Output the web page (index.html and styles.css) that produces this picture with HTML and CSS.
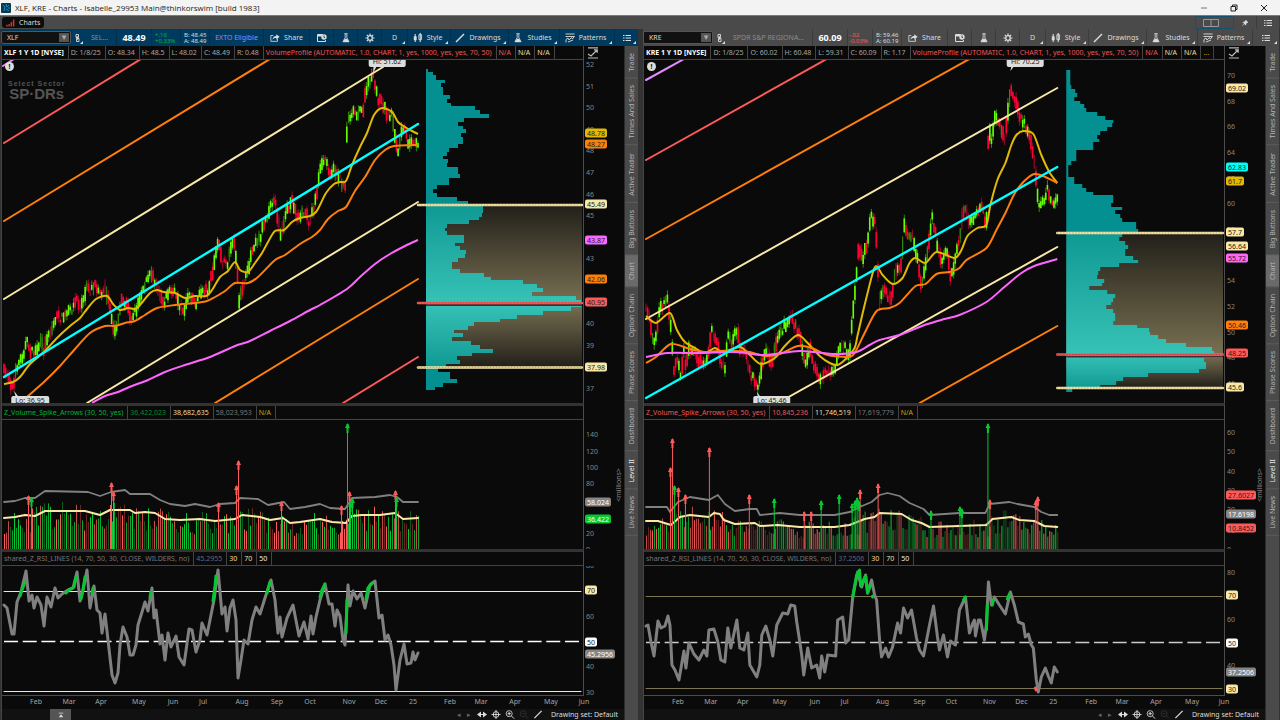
FILE: index.html
```html
<!DOCTYPE html>
<html lang="en">
<head>
    <meta charset="UTF-8">
    <meta name="viewport" content="width=device-width, initial-scale=1.0">
    <title>XLF, KRE - Charts - Main@thinkorswim</title>
    <link rel="stylesheet" href="styles.css">
</head>
<body>
    <svg class="sprite" aria-hidden="true">
        <symbol id="i-share" viewBox="0 0 12 10"><path d="M4 2H1v7h8V6" fill="none" stroke="currentColor"/><path d="M11.500 3.500L7.500.5v2C5 2.500 3.500 4 3 7c1-1.500 2.500-2 4.500-2v2z" fill="currentColor"/></symbol>
        <symbol id="i-cal" viewBox="0 0 10 10"><path d="M.5 2.500h5M.5 2v6.500h8V7M.5 1.500h5v1.500h-5z" fill="none" stroke="currentColor"/><circle cx="7" cy="4" r="2.700" fill="currentColor"/><path d="M7 2.500v2h1" fill="none" stroke="#334" stroke-width=".9"/></symbol>
        <symbol id="i-flask" viewBox="0 0 10 12"><path d="M3 .8h4M4 1v4.500L1.300 10.500h7.400L6 5.500V1" fill="none" stroke="currentColor"/><path d="M3.500 7h3l2 3.800h-7z" fill="currentColor"/></symbol>
        <symbol id="i-gear" viewBox="0 0 10 10"><circle cx="5" cy="5" r="2.300" fill="none" stroke="currentColor" stroke-width="1.300"/><path d="M5 .5v2M5 7.500v2M.5 5h2M7.500 5h2M1.800 1.800l1.400 1.400M6.800 6.800l1.400 1.400M1.800 8.200l1.400-1.400M6.800 3.200l1.400-1.400" stroke="currentColor" stroke-width="1.200"/></symbol>
        <symbol id="i-candle" viewBox="0 0 9 9"><path d="M2 1v7M6.500 0v8" stroke="currentColor"/><path d="M.7 3h2.600v3.500H.7z" fill="currentColor"/><path d="M5.300 1.500h2.400v4.500H5.300z" fill="none" stroke="currentColor" stroke-width=".8"/></symbol>
        <symbol id="i-line" viewBox="0 0 10 10"><path d="M1 9L9 1" stroke="currentColor" stroke-width="1.400"/></symbol>
        <symbol id="i-pattern" viewBox="0 0 10 10"><path d="M.5 1h9M.5 3.500h9M1 9.500v-3l2-1.500 1 2 2.500-2.500 1 1.500L9.500 3M3 9l5-2" fill="none" stroke="currentColor" stroke-width=".9"/></symbol>
        <symbol id="i-list" viewBox="0 0 8 8"><path d="M0 1.500h1.500M0 4h1.500M0 6.500h1.500M2.500 1.500H8M2.500 4H8M2.500 6.500H8" stroke="currentColor"/></symbol>
        <symbol id="i-link" viewBox="0 0 5 10"><path d="M1 1.500h2.500v3H1zM1.500 5.500H4v3H1.500zM2.200 3v4" fill="none" stroke="currentColor" stroke-width=".9"/></symbol>
        <symbol id="i-scale" viewBox="0 0 12 12"><path d="M1 .8h10M1 11h10M1 7l3 2 6-6M7 2.800h3.200v3" fill="none" stroke="currentColor" stroke-width="1.200"/></symbol>
        <symbol id="i-pan" viewBox="0 0 10 8"><path d="M0 4l4-3v6zM10 4L6 1v6z" fill="currentColor"/><path d="M2 4h6" stroke="currentColor"/></symbol>
        <symbol id="i-cross" viewBox="0 0 10 10"><circle cx="5" cy="5" r="3.200" fill="none" stroke="currentColor"/><path d="M5 0v10M0 5h10" stroke="currentColor"/></symbol>
        <symbol id="i-zoomin" viewBox="0 0 11 11"><circle cx="4.500" cy="4.500" r="3.700" fill="none" stroke="currentColor"/><path d="M7.500 7.500L10.500 10.500M4.500 2.500v4M2.500 4.500h4" stroke="currentColor" stroke-width="1.200"/></symbol>
        <symbol id="i-zoomout" viewBox="0 0 11 11"><circle cx="4.500" cy="4.500" r="3.700" fill="none" stroke="currentColor"/><path d="M7.500 7.500L10.500 10.500M2.500 4.500h4" stroke="currentColor"/></symbol>
        <symbol id="i-pin" viewBox="0 0 8 8"><path d="M5 0l3 3-1 .5-1.500 1.500L5 7 3 5 .5 7.500 3 5 1 3l2-.5L4.500 1z" fill="currentColor" stroke="currentColor" stroke-width=".5"/></symbol>
    </svg>

    <header class="titlebar">
        <svg class="app-icon" viewBox="0 0 10 10"><rect width="10" height="10" rx="1" fill="#083a50"/><path d="M2 2l2 2-1 4M5 1l1 3 2-2M5 6l3 2M7 5h2" stroke="#1b8fb8" fill="none"/></svg>
        <h1 class="window-title">XLF, KRE - Charts - Isabelle_29953 Main@thinkorswim [build 1983]</h1>
        <div class="window-controls">
            <button aria-label="Minimize"><svg viewBox="0 0 8 8"><path d="M1 4h6" stroke="#777"/></svg></button>
            <button aria-label="Restore"><svg viewBox="0 0 8 8"><path d="M1 2.500h4.500V7H1zM2.500 2.500V1H7v4.500H5.500" fill="none" stroke="#222"/></svg></button>
            <button aria-label="Close"><svg viewBox="0 0 8 8"><path d="M1 1l6 6M7 1L1 7" stroke="#222"/></svg></button>
        </div>
    </header>

    <nav class="tabbar">
        <button class="main-tab"><svg viewBox="0 0 10 8"><path d="M1 8V6M3.500 8V5M6 8V3M8.500 8V0" stroke="#e03030" stroke-width="1.600"/></svg>Charts</button>
        <div class="tabbar-tools">
            <button class="grid-btn" aria-label="Layout"><svg viewBox="0 0 16 8"><path d="M.5.5h15v7H.5zM8 .5v7" fill="none" stroke="#999"/></svg></button>
            <button class="pin-btn" aria-label="Pin"><svg class="ico-s"><use href="#i-pin"/></svg></button>
            <button class="pin-btn" aria-label="Menu"><svg class="ico"><use href="#i-list"/></svg></button>
        </div>
    </nav>

    <main class="workspace">
        <section class="panel panel-active" id="xlf">
            <div class="toolbar">
                <label class="symbol"><select aria-label="Symbol"><option>XLF</option></select></label>
                <button class="tool menu link" aria-label="Link"><svg class="ico-link"><use href="#i-link"/></svg></button>
                <span class="cell desc">SEL...</span>
                <span class="cell last">48.49</span>
                <span class="cell stack up"><span>+.16</span><span>+0.33%</span></span>
                <span class="cell stack"><span>B: 48.45</span><span>A: 48.49</span></span>
                <span class="cell exto">EXTO Eligible</span>
                <div class="tools"></div>
            </div>
            <div class="panel-body">
                <div class="charts">
                    <div class="row head">
                        <div class="labels">
                            <b>XLF 1 Y 1D [NYSE]</b><span>D: 1/8/25</span><span>O: 48.34</span><span>H: 48.5</span><span>L: 48.02</span><span>C: 48.49</span><span>R: 0.48</span><span class="red">VolumeProfile (AUTOMATIC, 1.0, CHART, 1, yes, 1000, yes, yes, 70, 50)</span><span class="red">N/A</span><span class="cream">N/A</span><span class="cream">N/A</span>
                        </div>
                        <div class="axis"><svg class="scale"><use href="#i-scale"/></svg></div>
                    </div>
                    <div class="row price">
                        <div class="plot">
                            <span class="info">!</span>
                            <div class="watermark"><small>Select Sector</small><strong>SP&#183;DRs</strong></div>
                        </div>
                        <div class="axis"></div>
                    </div>
                    <div class="row head sub">
                        <div class="labels"><span class="green">Z_Volume_Spike_Arrows (30, 50, yes)</span><span class="green dim">36,422,023</span><span class="cream">38,682,635</span><span class="dim">58,023,953</span><span class="gold">N/A</span></div>
                        <div class="axis"></div>
                    </div>
                    <div class="row volume"><div class="plot"></div><div class="axis"><span class="unit">&lt;millions&gt;</span></div></div>
                    <div class="row head sub">
                        <div class="labels"><span class="dim">shared_Z_RSI_LINES (14, 70, 50, 30, CLOSE, WILDERS, no)</span><span class="slate">45.2955</span><span class="cream">30</span><span class="cream">70</span><span class="white">50</span></div>
                        <div class="axis"></div>
                    </div>
                    <div class="row rsi"><div class="plot"></div><div class="axis"></div></div>
                    <div class="months"></div>
                    <div class="footer">
                        <button class="handle" aria-label="Expand"><svg viewBox="0 0 8 8"><path d="M1 1.500h6" stroke="#ddd"/><path d="M1 7l3-4 3 4z" fill="#ddd"/></svg></button>
                        <div class="footer-tools"></div>
                    </div>
                </div>
                <nav class="side"></nav>
            </div>
        </section>

        <section class="panel" id="kre">
            <div class="toolbar">
                <label class="symbol"><select aria-label="Symbol"><option>KRE</option></select></label>
                <button class="tool menu link" aria-label="Link"><svg class="ico-link"><use href="#i-link"/></svg></button>
                <span class="cell desc">SPDR S&amp;P REGIONA...</span>
                <span class="cell last">60.09</span>
                <span class="cell stack down"><span>-.02</span><span>-0.03%</span></span>
                <span class="cell stack"><span>B: 59.46</span><span>A: 60.19</span></span>
                <div class="tools"></div>
            </div>
            <div class="panel-body">
                <div class="charts">
                    <div class="row head">
                        <div class="labels">
                            <b>KRE 1 Y 1D [NYSE]</b><span>D: 1/8/25</span><span>O: 60.02</span><span>H: 60.48</span><span>L: 59.31</span><span>C: 60.09</span><span>R: 1.17</span><span class="red">VolumeProfile (AUTOMATIC, 1.0, CHART, 1, yes, 1000, yes, yes, 70, 50)</span><span class="red">N/A</span><span class="cream">N/A</span><span class="cream">N/A</span><span class="gold">...</span>
                        </div>
                        <div class="axis"><svg class="scale"><use href="#i-scale"/></svg></div>
                    </div>
                    <div class="row price">
                        <div class="plot"><span class="info">!</span></div>
                        <div class="axis"></div>
                    </div>
                    <div class="row head sub">
                        <div class="labels"><span class="red">Z_Volume_Spike_Arrows (30, 50, yes)</span><span class="red">10,845,236</span><span class="cream">11,746,519</span><span class="dim">17,619,779</span><span class="gold">N/A</span></div>
                        <div class="axis"></div>
                    </div>
                    <div class="row volume"><div class="plot"></div><div class="axis"><span class="unit">&lt;millions&gt;</span></div></div>
                    <div class="row head sub">
                        <div class="labels"><span class="dim">shared_Z_RSI_LINES (14, 70, 50, 30, CLOSE, WILDERS, no)</span><span class="slate">37.2506</span><span class="cream">30</span><span class="cream">70</span><span class="white">50</span></div>
                        <div class="axis"></div>
                    </div>
                    <div class="row rsi"><div class="plot"></div><div class="axis"></div></div>
                    <div class="months"></div>
                    <div class="footer"><div class="footer-tools"></div></div>
                </div>
                <nav class="side"></nav>
            </div>
        </section>
    </main>

    <script src="charts.js"></script>
</body>
</html>
```
FILE: styles.css
```css
* {
    margin: 0;
    padding: 0;
    box-sizing: border-box;
}

body {
    height: 100vh;
    display: flex;
    flex-direction: column;
    overflow: hidden;
    background: #0a0a0a;
    color: #a4a4a4;
    font-family: 'Noto Sans', 'Open Sans', sans-serif;
    font-size: 7px;
    line-height: 10px;
    white-space: nowrap;
}

button, select {
    font: inherit;
    color: inherit;
    background: none;
    border: none;
    white-space: nowrap;
}

svg {
    display: block;
}

.sprite {
    position: absolute;
    width: 0;
    height: 0;
}

/* Window chrome */
.titlebar {
    display: flex;
    align-items: center;
    gap: 4px;
    height: 15px;
    padding-left: 1px;
    background: #f3f3f3;
    color: #222;
}

.app-icon {
    width: 10px;
    height: 10px;
}

.window-title {
    flex: 1;
    font-family: 'Open Sans', 'Noto Sans', sans-serif;
    font-size: 8px;
    font-weight: 400;
}

.window-controls {
    display: flex;
    gap: 22px;
    padding-right: 12px;
}

.window-controls svg {
    width: 8px;
    height: 8px;
}

.tabbar {
    display: flex;
    justify-content: space-between;
    height: 14px;
    background: #4a4a4a;
    border-top: 1px solid #767c7c;
}

.main-tab {
    display: flex;
    align-items: center;
    gap: 4px;
    margin: 1px 2px;
    padding: 0 4px;
    border-radius: 3px;
    background: #0c0c0c;
    color: #ddd;
}

.main-tab svg {
    width: 9px;
    height: 8px;
}

.tabbar-tools {
    display: flex;
}

.grid-btn {
    width: 39px;
    padding-left: 7px;
    border: 1px solid #17506e;
}

.grid-btn svg {
    width: 16px;
    height: 8px;
}

.pin-btn {
    width: 23px;
    display: flex;
    align-items: center;
    justify-content: center;
    border-right: 1px solid #3c3c3c;
    color: #ddd;
}

.ico {
    width: 8px;
    height: 8px;
}

.ico-s {
    width: 6px;
    height: 6px;
}

/* Panels */
.workspace {
    flex: 1;
    min-height: 0;
    display: grid;
    grid-template-columns: 1fr 1fr;
    background: #333;
}

.panel {
    display: flex;
    flex-direction: column;
    min-width: 0;
    min-height: 0;
    padding: 0 1px 0 3px;
}

.panel-active {
    padding: 0 2px 0 1px;
}

.toolbar {
    display: flex;
    align-items: stretch;
    height: 17px;
    background: #4a4a4a;
    color: #dcdcdc;
}

.panel-active .toolbar {
    background: #003b5f;
}

.symbol {
    display: flex;
    align-items: center;
    position: relative;
    width: 70px;
}

.symbol select {
    appearance: none;
    width: 100%;
    height: 13px;
    padding-left: 5px;
    background: #111;
    border: 1px solid #555;
    border-radius: 2px;
}

.symbol::after {
    content: '▾';
    position: absolute;
    right: 2px;
    width: 10px;
    height: 9px;
    background: #555;
    color: #aaa;
    font-family: 'DejaVu Sans', sans-serif;
    font-size: 9px;
    line-height: 9px;
    text-align: center;
    pointer-events: none;
}

.cell, .tool {
    display: flex;
    align-items: center;
    justify-content: center;
    gap: 4px;
    border-right: 1px solid rgba(0, 0, 0, 0.18);
}

.tool {
    position: relative;
}

.tool.menu::after {
    content: '';
    position: absolute;
    right: 2px;
    bottom: 2px;
    border-left: 3px solid transparent;
    border-bottom: 3px solid #ddd;
}

.tool.link {
    width: 12px;
    border: none;
}

.tool.link::after {
    right: 0;
}

.ico-link {
    width: 5px;
    height: 10px;
}

.desc {
    width: 88px;
    color: #8a8a8a;
}

.panel-active .desc {
    width: 34px;
    color: #7c93a2;
}

.last {
    width: 35px;
    color: #fff;
    font-size: 9px;
    font-weight: 700;
}

.stack {
    width: 29px;
    flex-direction: column;
    align-items: flex-start;
    padding-left: 3px;
    gap: 0;
    font-size: 6px;
    line-height: 6px;
}

.up {
    color: #00b83a;
}

.down {
    color: #ff5656;
    width: 25px;
    padding-left: 1px;
}

.exto {
    width: 54px;
    color: #a583f2;
}

.tools {
    flex: 1;
    display: flex;
}

.w-share { width: 46px; }
.w-icon { width: 24px; }
.w-period { width: 26px; }
.w-style { width: 43px; }
.w-draw { width: 58px; }
.w-study { width: 51px; }
.w-pattern { width: 55px; }
.w-list { flex: 1; border: none; }

.w-style, .w-draw, .w-study, .w-pattern {
    padding-right: 3px;
}

.tool .ico-m {
    width: 10px;
    height: 10px;
}

/* Charts column */
.panel-body {
    flex: 1;
    min-height: 0;
    display: flex;
}

.charts {
    flex: 1;
    min-width: 0;
    display: flex;
    flex-direction: column;
    background: #0a0a0a;
    border-left: 1px solid #444;
}

.row {
    display: flex;
    min-height: 0;
}

.plot, .labels {
    flex: 1;
    min-width: 0;
    position: relative;
    border-right: 1px solid #4c4c4c;
}

.axis {
    width: 40px;
    position: relative;
}

.price {
    flex: 343;
}

.volume {
    flex: 129;
}

.rsi {
    flex: 130;
}

.volume .axis, .price .plot, .price .axis, .rsi .axis {
    overflow: hidden;
}

.rsi .plot {
    border-bottom: 1px solid #4c4c4c;
}

.head {
    height: 14px;
}

.sub {
    height: 17px;
}

.sub .labels {
    border-top: 3px solid #333;
}

.labels {
    display: flex;
    border-bottom: 1px solid #444;
    overflow: hidden;
}

.labels > * {
    display: flex;
    align-items: center;
    padding: 0 4px 0 2px;
    border-right: 1px solid #444;
}

.labels b {
    color: #fff;
}

.labels .red { color: #f05555; }
.labels .green { color: #00b33a; }
.labels .cream { color: #f0dfa0; }
.labels .gold { color: #c8a010; }
.labels .white { color: #eee; }
.labels .dim { color: #767676; }
.labels .slate { color: #60687c; }
.labels .green.dim { color: #008a30; }

.scale {
    width: 12px;
    height: 12px;
    margin: 1px 3px;
    color: #bbb;
}

.plot > svg {
    position: absolute;
    width: 100%;
    height: 100%;
}

.info {
    position: absolute;
    z-index: 1;
    left: 3px;
    top: 2px;
    width: 9px;
    height: 9px;
    border-radius: 50%;
    background: #ddd;
    color: #111;
    font-weight: 700;
    line-height: 9px;
    text-align: center;
}

.watermark {
    position: absolute;
    left: 6px;
    top: 20px;
    display: flex;
    flex-direction: column;
    align-items: center;
    color: #555;
    font-family: 'Liberation Sans', sans-serif;
    font-weight: 700;
}

.watermark small {
    font-size: 7px;
    line-height: 8px;
    letter-spacing: 1px;
}

.watermark strong {
    font-size: 15px;
    line-height: 11px;
}

.bubble {
    position: absolute;
    z-index: 1;
    transform: translate(-50%, -50%);
    height: 10px;
    padding: 0 4px;
    border-radius: 2px;
    background: #ddd;
    color: #222;
}

.tick, .badge {
    position: absolute;
    transform: translateY(-50%);
    left: 2px;
    color: #858585;
}

.badge {
    left: 1px;
    padding: 0 2px;
    border-radius: 2px;
    line-height: 9px;
    color: #222;
}

.c-cream { background: #f9e8a6; }
.c-gold { background: #e3b905; }
.c-orange { background: #ff7f0a; }
.c-pink { background: #ff66ff; }
.c-red { background: #ff5a5a; }
.c-cyan { background: #00ffff; }
.c-gray { background: #858585; color: #fff; }
.c-green { background: #08c832; color: #fff; }
.c-white { background: #fff; }

.unit {
    position: absolute;
    right: 0;
    top: 50%;
    writing-mode: vertical-rl;
    transform: translateY(-50%) rotate(180deg);
    color: #858585;
}

.months {
    position: relative;
    height: 13px;
    margin-right: 40px;
}

.months span {
    position: absolute;
    top: 1px;
    transform: translateX(-50%);
}

.footer {
    display: flex;
    align-items: center;
    height: 11px;
    background: #111;
}

.handle {
    width: 21px;
    height: 11px;
    margin-left: 48px;
    background: #555;
    display: flex;
    align-items: center;
    justify-content: center;
}

.handle svg {
    width: 6px;
    height: 6px;
}

.footer-tools {
    display: flex;
    align-items: center;
    gap: 4px;
    margin-left: auto;
    padding-right: 6px;
    color: #ddd;
}

.footer-tools svg {
    width: 10px;
    height: 9px;
}

.footer-tools .off {
    color: #333;
}

.footer-tools .arrows {
    color: #666;
    padding-right: 2px;
}

.footer-tools .set {
    padding-left: 4px;
}

/* Vertical gadget tabs */
.side {
    width: 14px;
    display: flex;
    flex-direction: column;
    background: #4a4a4a;
    border-left: 1px solid #2c2c2c;
}

.side a {
    display: flex;
    align-items: center;
    justify-content: center;
    padding: 6px 0 7px;
    writing-mode: vertical-rl;
    transform: rotate(180deg);
    border-top: 1px solid #5c5c5c;
    color: #b4b4b4;
    text-decoration: none;
}

.side .on {
    background: #6a6a6a;
}

.side .bright {
    color: #eee;
}
```
FILE: charts.js
```js
// Chart geometry is kept in window units; each plot maps its own slice of it.
const CREAM = '#f9e8a6', ORANGE = '#ff7f0a', RED = '#ff5a5a', CYAN = '#00ffff', PINK = '#ff66ff', GOLD = '#e3b905';
const UP = '#66ff00', DOWN = '#ff0033', GREEN = '#08c832', GRAY = '#808080';
const MONTHS = ['Feb', 'Mar', 'Apr', 'May', 'Jun', 'Jul', 'Aug', 'Sep', 'Oct', 'Nov', 'Dec', '25', 'Feb', 'Mar', 'Apr', 'May', 'Jun'];

const DATA = {
    xlf: {
        x0: 2, start: 4, end: 418, seed: 7, rsiEdge: CREAM, dash: '#fff',
        months: [36, 69, 101, 139, 173, 203, 242, 277, 310, 349, 381, 413, 450, 481, 515, 551, 584],
        price: '4,372 8,374 13,389 17,366 22,357 27,342 31,352 35,352 41,343 44,350 48,333 52,330 56,317 62,318 67,314 72,309 77,299 80,308 84,300 87,282 90,292 95,281 100,294 105,286 110,310 114,332 117,325 122,301 127,305 131,318 136,310 142,290 147,281 152,272 157,285 164,303 169,290 176,294 183,314 189,292 196,303 202,290 208,290 213,272 218,240 222,263 227,265 233,238 237,262 239,306 243,285 247,275 252,250 256,240 260,238 264,222 268,214 271,200 276,206 281,235 287,213 292,200 298,218 305,212 309,222 314,208 318,185 320,172 325,158 330,172 336,170 342,183 346,185 347,120 353,111 357,113 363,111 366,92 370,80 373,77 376,90 379,101 383,104 388,116 392,113 395,135 398,155 401,135 405,130 408,142 412,138 415,143 418,142',
        gold: '4,384 13,382 20,377 30,364 44,352 57,338 70,326 80,318 87,309 96,299 107,296 113,304 120,310 128,308 135,309 140,305 150,293 157,290 164,292 175,293 185,298 195,296 206,296 212,290 220,277 228,271 235,262 240,270 248,272 255,263 262,253 268,242 275,231 284,230 292,222 300,218 310,216 316,212 320,205 326,193 334,184 340,182 346,181 352,165 360,147 367,133 374,115 382,108 392,112 398,122 405,127 412,131 418,134',
        orange: '20,403 28,396 45,381 60,366 75,349 90,333 105,326 115,326 125,323 135,321 145,315 157,308 175,305 195,303 207,301 215,297 225,291 235,283 248,283 258,277 275,260 285,255 300,244 312,237 320,230 328,219 338,211 346,207 355,191 365,177 375,160 385,150 394,146 418,145',
        pink: '92,403 105,396 118,392 132,386 148,380 165,372 185,365 210,357 235,346 250,341 270,331 290,321 310,310 320,305 347,289 360,277 375,264 390,254 405,246 418,240',
        lines: [['3,66 14,59', '#e58cff'], ['4,143 141,59', RED], ['4,221 270,59', ORANGE], ['4,299 383,67', CREAM], ['87,403 418,202', CREAM], ['215,403 418,279', ORANGE], ['343,403 418,357', RED]],
        cyan: '4,377 418,124',
        bubbles: [['Hi: 51.62', 387, 62, 373, 73], ['Lo: 36.95', 30, 401, 14, 391]],
        // profile rows: bottom edge, right edge
        profile: { x: 426, top: 69, vah: 205, poc: 303, val: 367.5, right: 582, rows: '72,428 75,433 80,436 83,445 87,441 95,443 99,450 103,447 106,451 110,475 114,480 118,489 122,464 126,458 129,463 133,466 137,461 144,463 148,458 152,449 156,447 159,443 163,448 167,447 174,458 178,460 185,449 189,437 193,433 197,437 201,457 206,468 213,483 217,482 220,479 224,469 228,447 231,445 235,447 243,464 246,455 250,460 254,466 258,465 262,458 269,452 273,460 277,484 280,491 284,523 288,537 292,543 296,532 300,576 307,581 311,571 315,543 319,517 322,500 326,474 330,468 333,454 337,463 341,452 345,471 349,480 353,493 356,472 360,457 364,460 368,446 372,438 379,450 383,457 387,443 390,435' },
        ticks: [52, 51, 50, 49, 48, 47, 46, 45, 43, 42, 40, 39, 37].map(p => [p, 65 + (52 - p) * 21.6]),
        badges: [['48.78', 133, 'gold'], ['48.27', 144, 'orange'], ['45.49', 204, 'cream'], ['43.87', 240, 'pink'], ['42.06', 279, 'orange'], ['40.95', 302, 'red'], ['37.98', 367, 'cream']],
        volTicks: [[140, 435], [120, 452], [100, 468], [80, 484], [20, 534], [0, 550]],
        volBadges: [['58.024', 502, 'gray'], ['36.422', 519, 'green']],
        avg: '4,518 15,517 25,515 35,516 45,511 85,511 100,515 110,510 130,510 135,513 145,512 155,513 165,519 180,520 200,519 215,521 235,519 242,515 260,517 270,520 283,518 290,523 300,522 320,519 332,522 346,523 352,516 362,515 380,515 395,513 403,519 418,518',
        band: '4,502 15,501 25,498 35,498 45,491 88,492 100,496 111,492 125,490 130,494 150,494 160,500 170,504 185,506 195,504 210,507 220,504 235,503 240,498 258,499 268,505 284,502 290,509 305,507 320,504 330,508 345,509 352,498 375,497 390,495 397,497 403,502 418,502',
        redSpikes: '28,496 111,483 113,492 218,503 236,486 238,461 281,502 341,506 349,492 395,491',
        greenSpikes: '31,498 347,424 350,503 352,499 396,498',
        rsiTicks: [[80, 566], [60, 617], [40, 666], [30, 692]],
        rsiBadges: [['70', 590, 'cream'], ['50', 641, 'white'], ['45.2956', 653, 'gray']],
        rsiLevels: [591.5, 641.5, 691.5],
        rsi: '4,605 7,608 12,634 14,634 17,602 21,592 26,571 29,601 32,595 34,608 37,597 41,605 44,626 47,597 51,607 55,588 58,598 62,594 68,590 73,588 77,572 80,601 83,590 87,570 90,608 94,586 97,610 100,613 102,633 105,614 108,640 112,675 115,683 118,673 120,645 123,627 127,637 130,655 133,655 136,645 138,625 142,612 145,602 148,611 152,588 154,618 156,610 160,644 162,635 165,660 168,633 171,647 176,636 179,657 184,665 189,629 192,630 196,652 200,640 202,623 207,635 210,620 214,600 218,570 222,614 225,607 227,631 230,608 233,600 236,620 238,678 241,660 244,640 248,644 252,620 256,607 260,614 265,598 271,580 275,600 278,633 280,617 282,637 287,618 293,605 299,636 304,622 308,639 311,616 313,634 316,617 320,600 325,584 329,604 332,604 335,626 337,610 340,616 343,640 345,645 348,585 350,606 353,591 357,599 361,593 365,608 370,585 375,581 379,618 382,615 385,640 388,635 391,645 394,665 396,690 400,660 404,644 407,664 411,663 413,652 415,660 418,653',
        hot: ['20,596 22,590 25,582', '66,593 69,590 74,587 76,577', '81,599 83,590 85,577', '92,593 93,588', '150,597 151,592', '213,601 215,586 216,576', '267,593 270,582', '320,597 322,590 325,584', '346,633 347,600', '366,599 368,588 372,583']
    },
    kre: {
        x0: 644, start: 646, end: 1058, seed: 23, rsiEdge: '#7d7550', dash: '#ccc',
        months: [678, 711, 743, 780, 815, 845, 883, 920, 952, 990, 1022, 1054, 1092, 1123, 1157, 1193, 1225],
        price: '646,312 650,320 653,340 656,336 660,308 665,304 668,297 671,330 674,370 677,360 681,377 684,350 686,368 689,345 694,352 700,362 705,365 708,355 712,330 717,340 722,363 725,368 728,338 733,343 737,327 740,347 745,352 751,374 757,387 760,382 763,362 767,348 772,365 777,338 784,328 790,318 796,325 801,340 805,364 810,348 814,368 820,380 826,370 831,372 836,370 840,345 845,345 850,358 853,315 856,285 859,245 863,260 868,240 872,215 876,225 878,260 880,300 884,290 891,300 897,265 901,270 905,225 909,240 913,235 918,258 922,285 927,262 930,240 933,217 938,245 942,262 947,252 951,275 955,263 958,245 960,240 965,203 970,225 976,218 982,205 986,220 988,218 989,125 992,143 996,115 1002,128 1005,142 1009,110 1011,85 1013,95 1017,105 1020,118 1025,123 1031,138 1035,160 1039,205 1044,200 1048,190 1053,206 1058,200',
        gold: '646,316 656,323 670,313 677,330 685,342 695,348 705,353 715,348 723,352 740,347 750,355 761,364 775,358 785,346 798,335 808,343 820,356 830,363 838,365 846,359 855,348 858,335 865,305 874,270 878,267 883,275 893,284 903,278 910,263 916,258 926,263 937,252 955,258 962,250 968,236 978,228 987,225 991,205 998,180 1006,163 1012,145 1017,135 1024,131 1034,134 1042,155 1050,172 1058,183',
        orange: '646,363 656,357 671,344 690,349 705,352 718,351 735,351 750,352 765,356 780,354 798,346 812,348 828,355 848,357 855,353 865,333 877,311 890,308 900,303 916,286 926,284 937,274 950,272 960,268 967,260 987,248 997,230 1006,213 1015,194 1024,182 1035,174 1046,177 1058,183',
        pink: '646,357 668,353 700,353 735,352 765,355 800,351 835,354 857,352 870,345 880,340 900,335 925,325 945,319 960,315 987,302 1005,287 1022,273 1035,266 1058,259',
        lines: [['646,80 684,59', '#e58cff'], ['646,160 827,59', RED], ['646,239 970,59', ORANGE], ['646,319 1058,88', CREAM], ['778,403 1058,247', CREAM], ['920,403 1058,326', ORANGE]],
        cyan: '646,398 1058,167',
        bubbles: [['Hi: 70.25', 1026, 62, 1011, 71], ['Lo: 45.46', 772, 401, 757, 392]],
        profile: { x: 1067, top: 70, vah: 233, poc: 354.5, val: 388, right: 1224, rows: '85,1071 89,1072 93,1076 97,1078 101,1075 104,1081 108,1085 112,1087 116,1098 120,1106 123,1114 127,1113 131,1108 135,1101 139,1098 142,1100 150,1094 161,1077 165,1072 177,1069 184,1075 188,1083 192,1087 195,1094 203,1114 207,1112 210,1123 214,1116 218,1121 222,1123 229,1137 233,1139 237,1123 241,1120 245,1126 249,1129 256,1126 260,1134 263,1139 267,1120 271,1101 275,1099 279,1098 283,1105 286,1103 290,1090 294,1108 298,1116 302,1114 305,1112 309,1107 313,1114 321,1116 325,1114 328,1138 332,1150 335,1151 339,1159 343,1167 347,1187 351,1213 355,1215 358,1223 362,1205 369,1207 373,1200 377,1149 381,1124 385,1117 389,1101 392,1073' },
        ticks: [70, 68, 66, 64, 62, 60, 58, 54, 52, 50, 48, 46].map(p => [p, 76 + (70 - p) * 12.83]),
        badges: [['69.02', 88, 'cream'], ['62.83', 167, 'cyan'], ['61.7', 181, 'gold'], ['57.7', 232, 'cream'], ['56.64', 246, 'cream'], ['55.72', 258, 'pink'], ['50.46', 325, 'orange'], ['48.25', 353, 'red'], ['45.6', 387, 'cream']],
        volTicks: [[60, 433], [50, 452], [40, 472], [30, 491], [20, 510], [10, 531], [0, 550]],
        volBadges: [['27.6027', 495, 'red'], ['17.6198', 514, 'gray'], ['10.8452', 528, 'red']],
        avg: '646,521 658,521 671,525 680,517 690,515 709,517 714,513 720,514 724,520 735,524 755,523 760,526 778,525 800,527 835,527 850,525 865,519 875,517 880,513 902,514 912,520 922,523 930,527 960,526 987,525 993,519 1012,517 1020,520 1035,521 1045,526 1058,527',
        band: '646,507 667,507 670,512 678,502 690,497 709,500 718,495 725,504 735,511 750,509 757,509 760,515 780,513 800,515 835,515 850,512 860,507 872,502 880,495 888,493 900,496 910,503 924,509 930,515 945,514 960,513 986,513 990,504 1010,502 1018,504 1035,507 1042,512 1050,515 1058,515',
        redSpikes: '670,468 672,439 678,488 685,495 709,448 749,495 804,512 811,512 860,490 878,484 990,500 1036,501 1038,497',
        greenSpikes: '674,486 774,499 821,501 839,495 852,504 855,501 857,498 859,502 931,511 960,507 962,509 988,424',
        rsiTicks: [[80, 573], [60, 620], [40, 665]],
        rsiBadges: [['70', 595, 'cream'], ['50', 642, 'white'], ['37.2506', 671, 'gray'], ['30', 688, 'cream']],
        rsiLevels: [596.5, 642.5, 688.5],
        rsi: '646,626 648,625 651,642 654,656 658,621 661,628 665,626 668,616 670,625 672,665 675,670 679,680 684,651 686,668 689,643 694,654 699,660 704,650 707,656 709,630 714,629 718,642 721,660 725,662 728,628 731,648 737,620 740,648 744,650 748,633 750,665 757,677 760,665 762,635 766,626 770,640 773,656 777,625 783,613 788,614 791,605 795,606 797,622 799,635 802,655 804,675 808,648 812,668 817,665 820,678 822,656 825,672 828,655 836,656 838,620 843,617 846,643 849,640 853,598 858,572 862,587 866,575 868,593 872,580 875,595 877,600 880,640 882,657 886,648 889,657 893,647 898,623 901,633 904,608 908,618 912,610 917,638 920,650 924,656 930,625 934,606 938,637 940,650 944,635 948,657 951,641 956,645 960,610 966,597 970,633 973,624 975,620 976,636 979,620 981,620 985,640 987,625 989,582 992,605 995,597 1000,605 1006,614 1011,592 1015,605 1019,622 1024,624 1026,637 1029,634 1032,645 1034,648 1037,680 1039,692 1042,677 1046,668 1049,676 1052,683 1055,667 1058,672',
        hot: ['853,597 857,575 860,570 861,586 866,576 868,593 871,585', '873,597 873,596', '964,600 966,597', '987,630 988,605', '993,605 994,600', '1008,599 1010,594'],
        cold: '1036,688 1037,690'
    }
};

const points = s => s.split(' ').map(p => p.split(',').map(Number));

function random(seed) {
    return () => {
        seed = (seed * 16807) % 2147483647;
        return seed / 2147483647;
    };
}

function valueAt(pts, x) {
    for (let i = 1; i < pts.length; i++) {
        if (x <= pts[i][0]) {
            const [ax, ay] = pts[i - 1], [bx, by] = pts[i];
            return ay + (by - ay) * (x - ax) / (bx - ax);
        }
    }
    return pts[pts.length - 1][1];
}

const line = (pts, color, width, extra = '') =>
    `<polyline points="${pts}" fill="none" stroke="${color}" stroke-width="${width}" stroke-linejoin="round" stroke-linecap="round" ${extra}/>`;

// Smooth line through the same points, used for the moving averages
function curve(str, color, width) {
    const p = points(str);
    let path = `M${p[0]}`;
    for (let i = 0; i < p.length - 1; i++) {
        const a = p[i - 1] || p[i], b = p[i], c = p[i + 1], e = p[i + 2] || c;
        path += `C${b[0] + (c[0] - a[0]) / 7} ${b[1] + (c[1] - a[1]) / 7} ${c[0] - (e[0] - b[0]) / 7} ${c[1] - (e[1] - b[1]) / 7} ${c[0]} ${c[1]}`;
    }
    return `<path d="${path}" fill="none" stroke="${color}" stroke-width="${width}"/>`;
}

const rect = (x, y, w, h, fill) => `<rect x="${x}" y="${y}" width="${w}" height="${h}" fill="${fill}"/>`;

function candles(d) {
    const rnd = random(d.seed), pts = points(d.price), step = (d.end - d.start) / 250;
    let out = '';
    for (let i = 0; i <= 250; i++) {
        const x = d.start + i * step;
        const trend = valueAt(pts, x + 1) - valueAt(pts, x - 1);
        const jump = Math.abs(trend) > 25;
        const mid = valueAt(pts, x) + (rnd() - 0.5) * 7;
        const h = 2 + rnd() * 7 + (jump ? 8 : Math.min(10, Math.abs(trend) * 0.6));
        const up = trend < 0 ? rnd() < 0.8 : rnd() < 0.22;
        const top = mid - h / 2, wickTop = top - rnd() * 5, wickEnd = top + h + rnd() * 5;
        out += rect(x - 0.5, wickTop, 1, wickEnd - wickTop, up ? '#338a08' : '#8a0a28');
        out += rnd() < 0.2 ? rect(x - 0.5, top, 1, h, up ? '#338a08' : '#8a0a28') : rect(x - 0.8, top, 1.6, h, up ? UP : DOWN);
    }
    return out;
}

function profile(d, id) {
    const p = d.profile, end = points(p.rows).pop()[0];
    const at = y => ((y - p.top) / (end - p.top)).toFixed(4);
    let path = `M${p.x} ${p.top}`, y = p.top;
    for (const [bottom, right] of points(p.rows)) {
        path += `L${right} ${y}V${bottom}`;
        y = bottom;
    }
    path += `H${p.x}Z`;
    return `<defs>
        <linearGradient id="${id}-bars" gradientUnits="userSpaceOnUse" x1="0" x2="0" y1="${p.top}" y2="${end}">
            <stop offset="${at(p.vah)}" stop-color="#049090"/><stop offset="${at(p.vah)}" stop-color="#0f9994"/>
            <stop offset="${at(p.poc)}" stop-color="#37c2b6"/><stop offset="${at(p.val)}" stop-color="#0f9994"/>
            <stop offset="${at(p.val)}" stop-color="#049090"/>
        </linearGradient>
        <linearGradient id="${id}-area" gradientUnits="userSpaceOnUse" x1="0" x2="0" y1="${p.vah}" y2="${p.val}">
            <stop offset="0" stop-color="#211f19"/><stop offset="${(p.poc - p.vah) / (p.val - p.vah)}" stop-color="#797052"/><stop offset="1" stop-color="#211f19"/>
        </linearGradient></defs>`
        + rect(p.x, p.vah, p.right - p.x, p.val - p.vah, `url(#${id}-area)`)
        + `<path d="${path}" fill="url(#${id}-bars)"/>`
        + rect(p.x, p.poc + 1, p.right - p.x, 2, '#4a2a30')
        + [[p.vah, CREAM], [p.poc, RED], [p.val, CREAM]].map(([ly, c]) =>
            line(`${d.end} ${ly} ${p.right} ${ly}`, c, 2.5) + line(`${d.end} ${ly} ${p.right} ${ly}`, '#0004', 1, 'stroke-dasharray="1 2"')).join('');
}

function volumes(d) {
    const rnd = random(d.seed + 4), avg = points(d.avg), price = points(d.price);
    const colors = { up: ['#08c832', '#08a52e', '#0b5a1e'], down: ['#ff5a5a', '#c44a4a', '#6a2424'] };
    let out = '';
    const step = (d.end - d.start) / 207;
    for (let i = 0; i <= 207; i++) {
        const x = Math.round(d.start + i * step);
        const h = (550 - valueAt(avg, x)) * (0.5 + rnd() * 0.75);
        const set = valueAt(price, x + 2) <= valueAt(price, x) !== rnd() < 0.3 ? colors.up : colors.down;
        out += rect(x, 550 - h, 1, h, set[Math.floor(rnd() * 3)]);
    }
    const arrow = c => ([x, y]) => rect(x, y, 1, 550 - y, c) + `<path d="M${x + 0.5} ${y - 1}l2.500 5h-5z" fill="${c}"/>` + rect(x - 0.5, y, 2, 9, c);
    const spikes = points(d.redSpikes).map(arrow(RED)).join('') + points(d.greenSpikes).map(arrow(GREEN)).join('');
    return out + line(d.band, GRAY, 1.8) + line(d.avg, CREAM, 2) + spikes;
}

function rsi(d) {
    const [hi, mid, lo] = d.rsiLevels, end = d.x0 + 579;
    return line(`${d.start} ${hi} ${end} ${hi}`, d.rsiEdge, 1) + line(`${d.start} ${lo} ${end} ${lo}`, d.rsiEdge, 1)
        + `<path d="M${d.start} ${mid}H${end}" stroke="${d.dash}" stroke-width="1.500" stroke-dasharray="14 4.700"/>`
        + line(d.rsi, GRAY, 3) + d.hot.map(s => line(s, GREEN, 3)).join('') + (d.cold ? line(d.cold, RED, 3) : '');
}

function fill(row, d, y, h, body, ticks, badges) {
    row.querySelector('.plot').insertAdjacentHTML('beforeend',
        `<svg viewBox="${d.x0} ${y} 581 ${h}" preserveAspectRatio="none">${body}</svg>`);
    const place = v => `style="top:${((v - y) / h * 100).toFixed(2)}%"`;
    row.querySelector('.axis').insertAdjacentHTML('beforeend',
        ticks.map(([t, v]) => `<span class="tick" ${place(v)}>${t}</span>`).join('')
        + badges.map(([t, v, c]) => `<span class="badge c-${c}" ${place(v)}>${t}</span>`).join(''));
}

const icon = (name, cls = 'ico-m') => `<svg class="${cls}"><use href="#i-${name}"/></svg>`;
const TOOLS = [
    ['share', 'share', 'Share'], ['icon', 'cal'], ['icon', 'flask'], ['icon', 'gear'], ['period menu', '', 'D'],
    ['style menu', 'candle', 'Style'], ['draw menu', 'line', 'Drawings'], ['study menu', 'flask', 'Studies'],
    ['pattern menu', 'pattern', 'Patterns'], ['list menu', 'list']
];
const SIDE = ['Trade', 'Times And Sales', 'Active Trader', 'Big Buttons', 'Chart', 'Option Chain', 'Phase Scores', 'Dashboard', 'Level II', 'Live News'];

for (const [id, d] of Object.entries(DATA)) {
    const panel = document.getElementById(id);
    const find = s => panel.querySelector(s);

    find('.tools').innerHTML = TOOLS.map(([w, i, text]) =>
        `<button class="tool w-${w}" aria-label="${text || i}">${i ? icon(i, i === 'list' ? 'ico' : 'ico-m') : ''}${text || ''}</button>`).join('');
    find('.side').innerHTML = SIDE.map(t =>
        `<a href="#${id}" class="${t === 'Chart' ? 'on' : t === 'Level II' ? 'bright' : ''}">${t}</a>`).join('');
    find('.footer-tools').innerHTML = `<span class="arrows">◂ &nbsp; ▸</span>${icon('pan')}${icon('cross')}${icon('zoomin')}${icon('zoomout', 'off')}${icon('line')}<span class="set">Drawing set: Default</span>`;

    const price = profile(d, id) + candles(d)
        + d.lines.map(([p, c]) => line(p, c, 2)).join('')
        + curve(d.gold, GOLD, 2) + curve(d.orange, ORANGE, 2) + curve(d.pink, PINK, 2) + line(d.cyan, CYAN, 2.4)
        + d.bubbles.map(([, bx, by, tx, ty]) => `<path d="M${tx} ${ty}L${bx - 13} ${by}h5z" fill="#ddd"/>`).join('');
    fill(find('.price'), d, 60, 343, price, d.ticks, d.badges);
    find('.price .plot').insertAdjacentHTML('beforeend', d.bubbles.map(([t, x, y]) =>
        `<span class="bubble" style="left:${(x - d.x0) / 5.81}%;top:${(y - 60) / 3.43}%">${t}</span>`).join(''));
    fill(find('.volume'), d, 420, 129, volumes(d), d.volTicks, d.volBadges);
    fill(find('.rsi'), d, 566, 129, rsi(d), d.rsiTicks, d.rsiBadges);
    find('.months').innerHTML = MONTHS.map((m, i) => `<span style="left:${(d.months[i] - d.x0) / 5.82}%">${m}</span>`).join('');
}
```
